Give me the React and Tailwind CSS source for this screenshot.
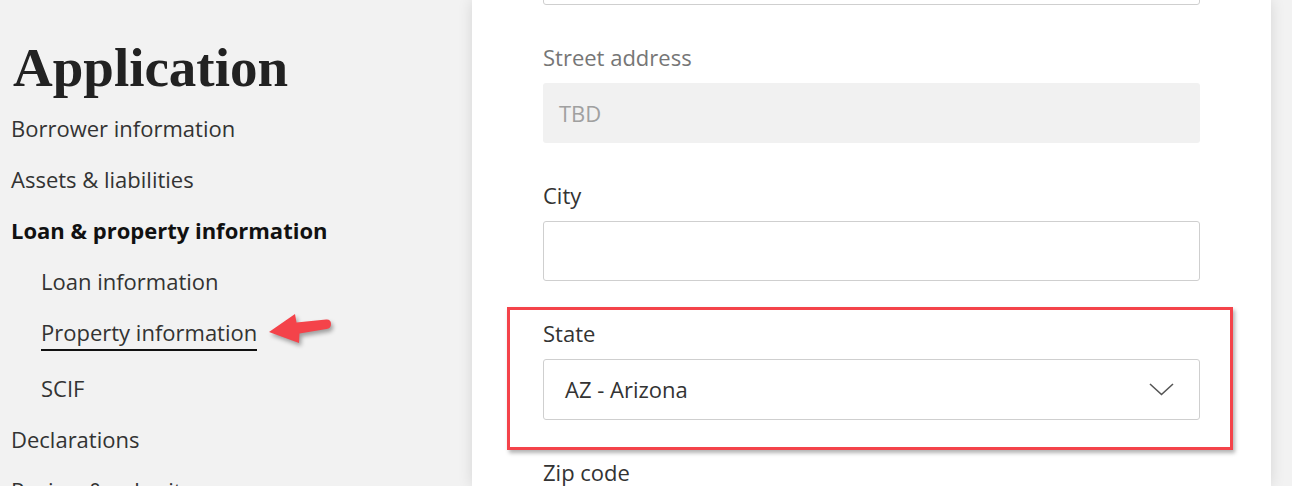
import React from 'react';

// Left navigation entry
const NavItem = ({ label, sub, bold, active }) => (
    <div className={`${sub ? 'pl-[41px]' : 'pl-[11px]'} leading-[27px]`}>
        <span
            className={`inline-block ${bold ? 'font-bold text-[#111]' : 'text-[#333]'} ${
                active ? 'border-b-2 border-[#111] pb-[3px]' : ''
            }`}
        >
            {label}
        </span>
    </div>
);

// Label + input block on the form card
const Field = ({ label, muted, children }) => (
    <div className="flex flex-col">
        <label className={`leading-[26px] mb-[13px] ${muted ? 'text-[#767676]' : 'text-[#333]'}`}>{label}</label>
        {children}
    </div>
);

const Chevron = () => (
    <svg width="25" height="13" viewBox="0 0 25 13" fill="none" className="shrink-0">
        <path d="M1 1 L12.5 11.5 L24 1" stroke="#555" strokeWidth="1.6" />
    </svg>
);

const Arrow = () => (
    <svg
        width="72"
        height="44"
        viewBox="0 0 72 44"
        className="absolute left-[265px] top-[308px] drop-shadow-[2px_3px_2px_rgba(0,0,0,0.35)]"
    >
        <path d="M4 24 L30 6 L31.5 14.5 L61 11.5 Q66 11 66 16 Q66 20.5 61.5 21 L34.5 25.5 L34 35 Z" fill="#f4434a" />
    </svg>
);

export default function App() {
    const navItems = [
        { label: 'Borrower information' },
        { label: 'Assets & liabilities' },
        { label: 'Loan & property information', bold: true },
        { label: 'Loan information', sub: true },
        { label: 'Property information', sub: true, active: true },
        { label: 'SCIF', sub: true },
        { label: 'Declarations' },
        { label: 'Review & submit' },
    ];

    return (
        <div className="flex h-[486px] w-[1292px] overflow-hidden bg-[#f2f2f2] font-['Open_Sans',sans-serif] text-[22px]">
            {/* sidebar */}
            <aside className="relative w-[472px] shrink-0 pt-[40px]">
                <h1 className="pl-[13px] font-['Liberation_Serif',serif] text-[55px] font-bold leading-[55px] text-[#222]">
                    Application
                </h1>
                <nav className="mt-[20px] flex flex-col gap-[24px]">
                    {navItems.map(item => (
                        <NavItem key={item.label} {...item} />
                    ))}
                </nav>
                <Arrow />
            </aside>

            {/* form card */}
            <main className="relative z-10 w-[799px] shrink-0 bg-white pl-[71px] shadow-[0_0_14px_rgba(0,0,0,0.12)]">
                <div className="flex w-[657px] flex-col gap-[39px]">
                    <div className="mt-[-55px] h-[60px] rounded-[3px] border border-[#cfcfcf] bg-white" />

                    <Field label="Street address" muted>
                        <div className="flex h-[60px] items-center rounded-[3px] bg-[#f1f1f1] pl-[16px] text-[#a0a0a0]">
                            TBD
                        </div>
                    </Field>

                    <Field label="City">
                        <div className="h-[60px] rounded-[3px] border border-[#cfcfcf] bg-white" />
                    </Field>

                    <Field label="State">
                        <div className="flex h-[61px] items-center justify-between rounded-[3px] border border-[#cfcfcf] bg-white pl-[21px] pr-[25px] text-[#333]">
                            <span>AZ - Arizona</span>
                            <Chevron />
                        </div>
                    </Field>

                    <Field label="Zip code">
                        <div className="h-[60px] rounded-[3px] border border-[#cfcfcf] bg-white" />
                    </Field>
                </div>

                {/* highlight box */}
                <div className="absolute left-[35px] top-[307px] h-[143px] w-[726px] border-[3px] border-[#f4434a] shadow-[2px_3px_4px_rgba(0,0,0,0.3)]" />
            </main>

            <div className="flex-1" />
        </div>
    );
}
